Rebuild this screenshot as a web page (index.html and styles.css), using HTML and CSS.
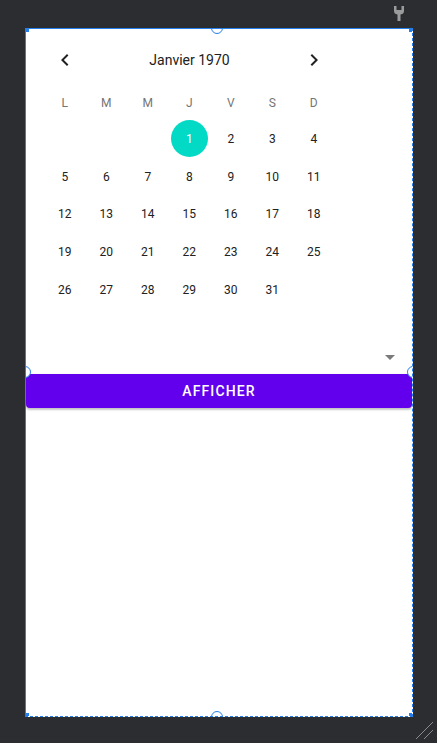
FILE: index.html
```html
<!DOCTYPE html>
<html lang="fr">
<head>
<meta charset="utf-8">
<title>Calendrier</title>
<link rel="stylesheet" href="styles.css">
</head>
<body>
<div class="topbar">
  <svg class="wrench" width="12" height="16" viewBox="0 0 12 16" aria-hidden="true">
    <path d="M1 1 L3.5 1 L3.5 5 L8.5 5 L8.5 1 L11 1 L11 6 Q11 9 7.5 9.5 L7.5 16 L4.5 16 L4.5 9.5 Q1 9 1 6 Z" fill="#9a9b9d"/>
  </svg>
</div>
<div class="frame">
  <div class="calendar">
    <div class="cal-head">
      <span class="nav">
        <svg width="24" height="24" viewBox="0 0 24 24"><path d="M15.41 7.41L14 6l-6 6 6 6 1.41-1.41L10.83 12z" fill="#212121"/></svg>
      </span>
      <span class="title">Janvier 1970</span>
      <span class="nav">
        <svg width="24" height="24" viewBox="0 0 24 24"><path d="M8.59 16.59L10 18l6-6-6-6-1.41 1.41L13.17 12z" fill="#212121"/></svg>
      </span>
    </div>
    <div class="dow">
      <span>L</span><span>M</span><span>M</span><span>J</span><span>V</span><span>S</span><span>D</span>
    </div>
    <div class="days">
      <span></span><span></span><span></span>
      <span class="sel"><b>1</b></span><span>2</span><span>3</span><span>4</span>
      <span>5</span><span>6</span><span>7</span><span>8</span><span>9</span><span>10</span><span>11</span>
      <span>12</span><span>13</span><span>14</span><span>15</span><span>16</span><span>17</span><span>18</span>
      <span>19</span><span>20</span><span>21</span><span>22</span><span>23</span><span>24</span><span>25</span>
      <span>26</span><span>27</span><span>28</span><span>29</span><span>30</span><span>31</span>
    </div>
  </div>
  <div class="spinner"><span class="caret"></span></div>
  <button class="btn">AFFICHER</button>

  <span class="corner c-tl"></span><span class="corner c-tr"></span>
  <span class="corner c-bl"></span><span class="corner c-br"></span>
  <span class="handle h-top"></span><span class="handle h-bottom"></span>
  <span class="handle h-left"></span><span class="handle h-right"></span>
</div>
<svg class="grip" width="20" height="20" viewBox="0 0 20 20" aria-hidden="true">
  <path d="M1 19 L18 2 M9 19 L18 10" stroke="#8a8b8d" stroke-width="1" fill="none"/>
</svg>
</body>
</html>
```
FILE: styles.css
```css
html, body {
  margin: 0;
  padding: 0;
}
body {
  width: 437px;
  height: 743px;
  overflow: hidden;
  background: #2c2d30;
  font-family: Roboto, "Noto Sans", sans-serif;
  position: relative;
}
.topbar {
  height: 28px;
  display: flex;
  justify-content: flex-end;
  align-items: flex-start;
  padding-right: 32px;
  box-sizing: border-box;
}
.wrench {
  margin-top: 5px;
}
.frame {
  position: relative;
  margin-left: 25px;
  width: 388px;
  height: 689px;
  box-sizing: border-box;
  background: #fff;
  border-left: 1px solid #2680eb;
  border-top: 1px solid #2680eb;
  border-right: 1px dashed #2680eb;
  border-bottom: 1px dashed #2680eb;
  overflow: hidden;
  display: flex;
  flex-direction: column;
}
.calendar {
  padding-left: 18px;
  width: 291px;
}
.cal-head {
  margin-top: 11px;
  height: 40px;
  display: flex;
  align-items: center;
  justify-content: space-between;
}
.nav {
  width: 41.5px;
  display: flex;
  justify-content: center;
  align-items: center;
}
.title {
  font-size: 14px;
  color: #212121;
}
.dow {
  margin-top: 8px;
  height: 30px;
  display: grid;
  grid-template-columns: repeat(7, 41.5px);
  align-items: center;
  justify-items: center;
  font-size: 12px;
  color: #757575;
}
.days {
  margin-top: 2px;
  display: grid;
  grid-template-columns: repeat(7, 41.5px);
  grid-auto-rows: 37.75px;
  align-items: center;
  justify-items: center;
  font-size: 12px;
  color: #212121;
}
.days span {
  display: flex;
  align-items: center;
  justify-content: center;
}
.days .sel {
  width: 37px;
  height: 37px;
  border-radius: 50%;
  background: #03dac5;
  color: #fff;
}
.days .sel b {
  font-weight: 400;
}
.spinner {
  height: 65px;
  display: flex;
  justify-content: flex-end;
  align-items: flex-end;
  padding-right: 17px;
  padding-bottom: 14px;
  box-sizing: border-box;
}
.caret {
  width: 0;
  height: 0;
  border-left: 5px solid transparent;
  border-right: 5px solid transparent;
  border-top: 5px solid #7a7a7a;
}
.btn {
  height: 34px;
  width: 100%;
  border: none;
  border-radius: 4px;
  background: #6200ee;
  color: #fff;
  font-family: Roboto, "Noto Sans", sans-serif;
  font-size: 14px;
  font-weight: 500;
  letter-spacing: 1.1px;
  box-shadow: 0 2px 2px rgba(0, 0, 0, 0.22), 0 0 1px rgba(0,0,0,0.2);
  padding: 0;
}
.corner {
  position: absolute;
  width: 4px;
  height: 4px;
  background: #2680eb;
}
.c-tl { left: -1px; top: -1px; }
.c-tr { right: -1px; top: -1px; }
.c-bl { left: -1px; bottom: -1px; }
.c-br { right: -1px; bottom: -1px; }
.handle {
  position: absolute;
  width: 12px;
  height: 12px;
  border: 1.5px solid #2680eb;
  border-radius: 50%;
  background: #fff;
  box-sizing: border-box;
}
.h-top { left: 185px; top: -7px; }
.h-bottom { left: 185px; bottom: -7px; }
.h-left { left: -7px; top: 337px; }
.h-right { right: -7px; top: 337px; }
.grip {
  position: absolute;
  left: 415px;
  top: 720px;
}
```
